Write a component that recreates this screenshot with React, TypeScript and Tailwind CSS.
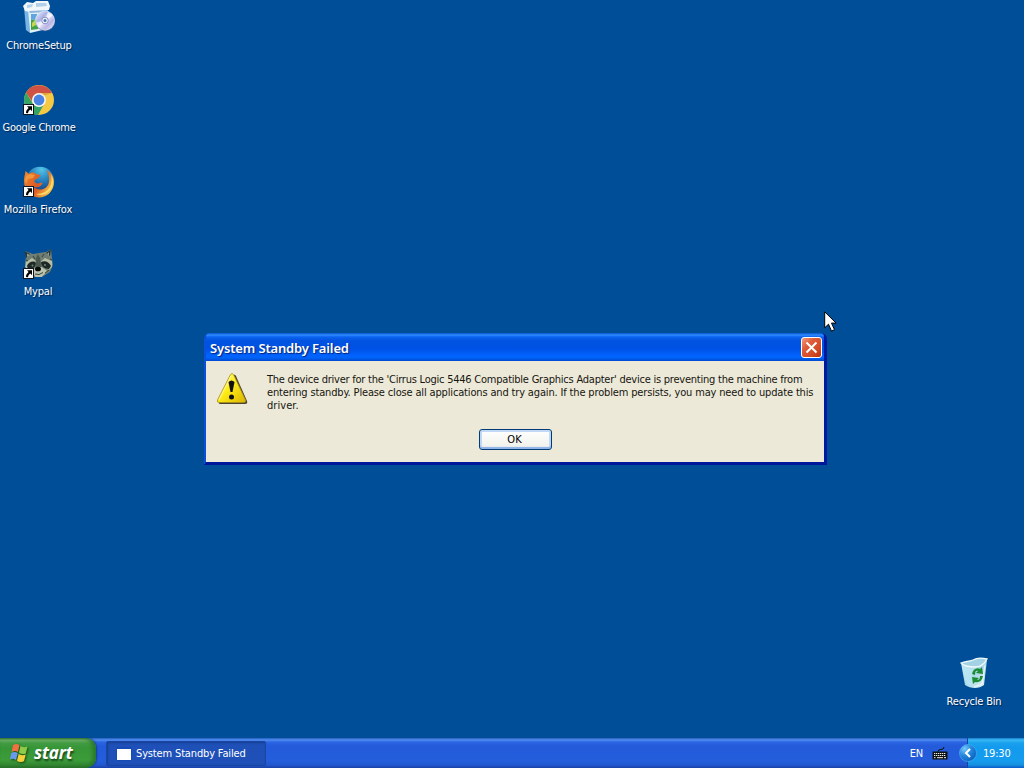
import type { ReactNode } from "react";

const tahoma = "font-['DejaVu_Sans_Condensed','DejaVu_Sans',sans-serif] [font-stretch:condensed]";

function ShortcutArrow() {
  return (
    <g>
      <rect x="0.500" y="20.500" width="10" height="10" fill="#fff" stroke="#10141c" strokeWidth="1" />
      <path d="M4 22.200h5v5L7.400 25.600C6 26.500 5.300 27.700 5 29.300L3 28.900c0-2 .8-3.500 2.600-5z" fill="#000" />
    </g>
  );
}

function SetupIcon() {
  return (
    <svg width="32" height="34" viewBox="0 0 32 34">
      <defs>
        <linearGradient id="disc" x1="0" y1="0" x2="1" y2="1">
          <stop offset="0" stopColor="#f8f8ff" />
          <stop offset=".35" stopColor="#a9b1e5" />
          <stop offset=".5" stopColor="#e9e5fb" />
          <stop offset=".7" stopColor="#b9b4e4" />
          <stop offset="1" stopColor="#eef1ff" />
        </linearGradient>
      </defs>
      <path d="M1 7l5 1 1 25-4-3z" fill="#76b6e6" />
      <path d="M5 8h20l-1 21-17 4z" fill="#e2eff8" />
      <path d="M0 6l4-4 6 1 3-2h12l2 5-1 4-19 2-5-1z" fill="#f1f7fb" />
      <path d="M4 5l6-1-1 3-5 1zM13 3h10l1 3-11 1z" fill="#b4cfe8" />
      <path d="M6 11l19-1v2L7 13z" fill="#8fb8dc" />
      <path d="M8 14h6v5l-6 1z" fill="#5fa6e1" />
      <path d="M8 20l7-1v10l-7 1z" fill="#43a347" />
      <path d="M9 23l3-3 1 5-4 2z" fill="#c7d650" />
      <circle cx="22.200" cy="21.500" r="9.700" fill="#65739f" />
      <circle cx="22" cy="20.500" r="9.500" fill="url(#disc)" stroke="#dce6f8" strokeWidth=".7" />
      <path d="M22 20.500l3-9 5 4zM22 20.500l-9 2 3 5z" fill="#fff" opacity=".65" />
      <circle cx="22" cy="20.500" r="3.300" fill="#eff2fc" stroke="#878fc4" />
      <circle cx="22" cy="20.500" r="1.500" fill="#4977a9" />
    </svg>
  );
}

function ChromeIcon() {
  return (
    <svg width="32" height="32" viewBox="0 0 32 32">
      <circle cx="16" cy="16" r="15" fill="#f6c944" />
      <path d="M3 8.500A15 15 0 0 1 29 9H16a7 7 0 0 0-6.500 9z" fill="#d05245" />
      <path d="M3 8.500A15 15 0 0 0 15 31l6.500-11.500A7 7 0 0 1 9.900 19.500z" fill="#35a365" />
      <path d="M16 9h13l-8 2.500z" fill="#c9802e" opacity=".5" />
      <circle cx="16" cy="16" r="7" fill="#f5f5ef" />
      <circle cx="16" cy="16" r="5.400" fill="#4b83e4" />
      <ShortcutArrow />
    </svg>
  );
}

function FirefoxIcon() {
  return (
    <svg width="32" height="32" viewBox="0 0 32 32" className="ml-[2px]">
      <defs>
        <radialGradient id="globe" cx=".55" cy=".1" r=".8">
          <stop offset="0" stopColor="#53c5e7" />
          <stop offset=".5" stopColor="#267fbe" />
          <stop offset="1" stopColor="#153979" />
        </radialGradient>
        <linearGradient id="fox" x1="0" y1="0" x2="1" y2=".5">
          <stop offset="0" stopColor="#ee8730" />
          <stop offset=".6" stopColor="#dc5824" />
          <stop offset="1" stopColor="#f6c145" />
        </linearGradient>
      </defs>
      <circle cx="17" cy="15" r="14.300" fill="url(#globe)" />
      <path d="M2.500 5l3.500 3C8 6 11 6 13 8l4.500 1-2 3-4 2c-.5 2 1 3.500 3 3.500 2 0 3-1 5-.5-2 5-7 5-10 3 4 5 13 5 16-2 1.500-5 .500-10-2-14 4.500 2 7.500 7 7.500 12C31 25 24 31.500 16 31.500 7 31 1 24 1 15c0-3 .5-5 1-7z" fill="url(#fox)" />
      <path d="M3 10l4-2 5 1-2 3-5 1-2 5c-1-3-1-5 0-8z" fill="#f2993c" />
      <path d="M28 8c4 7 2 15-4 19-4 2.500-8 2.500-11 1 7 0 12-3 14.500-8 1.500-4 1.500-8 .5-12z" fill="#ffe477" opacity=".85" />
      <ShortcutArrow />
    </svg>
  );
}

function RaccoonIcon() {
  return (
    <svg width="32" height="32" viewBox="0 0 32 32" className="ml-[2px]">
      <path d="M2 3l8 3 6-1 7-1 5-3 1 9 1 7-3 7-8 5H11l-7-7-2-7 1-6z" fill="#6f7d72" />
      <path d="M1.500 3l5.500 3-4 4zM28 1l-5 4 4 3z" fill="#26383a" />
      <path d="M4 5.500l3 1.500-3 2zM26 4l-2 2 2 2z" fill="#8f9c8f" />
      <path d="M3 14l6-4 5 4-2 4-7 4-3-3zM29 13l-7-3-5 4 3 4 6 4 3-3z" fill="#b5bea6" />
      <path d="M4 18c1-4 7-6 9-3 0 4-3 6-8 6zM18 14c4-2 8 0 10 4l-2 3c-5 0-8-3-8-7z" fill="#1e2825" />
      <path d="M13 10l2-4 2 4 1.500 9-3 3-3-3z" fill="#4b5850" />
      <path d="M8.500 23l5-4 5 0 6 4-6 6h-6z" fill="#bcc4ae" />
      <ellipse cx="15" cy="21" rx="3" ry="2.300" fill="#080a0a" />
      <path d="M12 26l4 .5 4-2M10 8l2 3M19 9l2-3M3 12l2 1M27 11l2 1M22 25l4-3" stroke="#33423d" strokeWidth="1" fill="none" />
      <circle cx="9.500" cy="17.500" r="1" fill="#71837c" />
      <circle cx="22" cy="17" r="1" fill="#71837c" />
      <ShortcutArrow />
    </svg>
  );
}

function RecycleIcon() {
  return (
    <svg width="32" height="32" viewBox="0 0 32 32">
      <defs>
        <linearGradient id="bin" x1="0" y1="0" x2="1" y2="1">
          <stop offset="0" stopColor="#d3eff5" />
          <stop offset=".5" stopColor="#a6d5e8" />
          <stop offset="1" stopColor="#e4f5f7" />
        </linearGradient>
      </defs>
      <path d="M3 6l14 3 12-6-3 25c-5 4-13 4-19 0z" fill="url(#bin)" />
      <path d="M3 6c5-2 7-1 12-3 5-3 10-2 14-1-2 4-6 8-12 8C11 10 6 9 3 6z" fill="#a3d2e4" stroke="#effafa" strokeWidth="1.300" />
      <path d="M4 9l11 3-1 17-6-2z" fill="#b9e8f3" opacity=".7" />
      <path d="M27 8l-3 19-8 3" stroke="#fff" opacity=".7" fill="none" />
      <g fill="#1c8c32">
        <path d="M14 17c1-5 5-7 8-5l2-2 1 7-7-1 2-2c-2-1-3 0-3 4z" />
        <path d="M25 19c-1 5-4 7-8 6l-2 2-1-7 7 1-2 2c2 0 3-1 3-4z" />
      </g>
    </svg>
  );
}

function DesktopIcon({ place, labelClass, label, children }: { place: string; labelClass: string; label: string; children: ReactNode }) {
  return (
    <div className={`absolute flex w-[78px] flex-col items-center ${place}`}>
      {children}
      <span className={`whitespace-nowrap text-[11px] leading-[14px] text-white [text-shadow:1px_1px_1px_#00254f] ${labelClass}`}>{label}</span>
    </div>
  );
}

function WarningIcon() {
  return (
    <svg width="34" height="34" viewBox="0 0 34 34" className="-mt-px -ml-px mr-px shrink-0">
      <defs>
        <linearGradient id="warn" x1="0" y1="0" x2="1" y2="1">
          <stop offset="0" stopColor="#ffff91" />
          <stop offset=".45" stopColor="#ffee18" />
          <stop offset="1" stopColor="#dbb400" />
        </linearGradient>
      </defs>
      <path d="M17 3q2-1 3 1l11 25q1 3-2 3H5q-3 0-2-2z" fill="#4b432c" />
      <path d="M14.500 2.500q1.500-2 3 0L29.500 28q1 2.500-2 2.500H3.500q-3 0-2-2.500z" fill="url(#warn)" stroke="#a88e1f" strokeWidth=".8" />
      <path d="M3 28l12-24" stroke="#fff6a2" />
      <path d="M12.500 10q3-3 6 0l-2 10h-2z" fill="#111" />
      <circle cx="15.500" cy="25" r="2.500" fill="#111" />
    </svg>
  );
}

function Dialog() {
  return (
    <section className="absolute left-[204px] top-[333px] flex h-[132px] w-[623px] flex-col rounded-t-[6px] border-b-[3px] border-l-2 border-r-[3px] border-b-[#00169b] border-l-[#0b50d8] border-r-[#0019a0] bg-[#0054e3]">
      <header className="flex h-7 shrink-0 items-center justify-between rounded-t-[4px] bg-[linear-gradient(180deg,#0755cc_0,#308bff_2px,#0a62ef_4px,#0052df_8px,#0052e6_16px,#0064ff_23px,#0062f5_25px,#0048d0_28px)] pl-[4px] pr-[2px]">
        <h1 className="pt-px font-['Noto_Sans',sans-serif] text-[13px] font-semibold leading-[18px] tracking-[-0.15px] text-white [text-shadow:1px_1px_1px_#052279]">System Standby Failed</h1>
        <button aria-label="Close" className="flex h-[21px] w-[21px] items-center justify-center rounded-[3px] border border-white bg-[linear-gradient(135deg,#ed9a7a_0%,#df5b3a_35%,#d44a25_70%,#b9310d_100%)]">
          <svg width="13" height="13" viewBox="0 0 13 13"><path d="M1.500 1.500l10 10M11.500 1.500l-10 10" stroke="#fff" strokeWidth="2" /></svg>
        </button>
      </header>
      <div className="flex min-h-0 flex-1 flex-col items-center bg-[#ece9d8]">
        <div className="flex h-[67px] w-full pl-[11px] pt-[12px]">
          <WarningIcon />
          <div className="flex flex-col pl-[16px] text-[11px] leading-[13px] text-[#161510]">
            <span className="whitespace-nowrap tracking-[-0.232px]">The device driver for the 'Cirrus Logic 5446 Compatible Graphics Adapter' device is preventing the machine from</span>
            <span className="whitespace-nowrap tracking-[-0.155px]">entering standby. Please close all applications and try again. If the problem persists, you may need to update this</span>
            <span className="whitespace-nowrap tracking-[0.05px]">driver.</span>
          </div>
        </div>
        <button className="mt-px h-[21px] w-[73px] rounded-[3px] border border-[#003c74] bg-[linear-gradient(#fff,#f0f0ea)] pr-px pt-px text-[11px] leading-[18px] text-black shadow-[inset_0_-2px_1px_#90b2e8,inset_0_0_0_2px_#c2d8f7]">OK</button>
      </div>
    </section>
  );
}

function WindowsFlag() {
  return (
    <svg width="20" height="20" viewBox="0 0 20 20" className="shrink-0 drop-shadow-[1px_1px_1px_#174b15]">
      <path d="M3 2q3-2 6.500 0L8 9Q5 7 1.500 9z" fill="#ef7142" />
      <path d="M10.500 3q3 2 7 .5l-1.700 7Q12 12 9 9.500z" fill="#8ecb49" />
      <path d="M1.300 10Q5 8 7.700 10.200L6 17q-3-2-6.200-.5z" fill="#6a9aeb" />
      <path d="M8.700 11q3.500 2.200 7 .5l-1.700 6.800Q10 20 7 17.800z" fill="#f7cf3b" />
    </svg>
  );
}

function Taskbar() {
  return (
    <footer className="flex h-[30px] w-full items-stretch bg-[linear-gradient(180deg,#255dbe_0,#4f8ef0_2px,#2d66e3_4px,#235bdb_8px,#245edb_23px,#2158cf_27px,#1941a5_30px)]">
      <button className="flex w-[96px] items-center gap-[4px] rounded-r-[10px] bg-[linear-gradient(180deg,#347836_0,#72b36e_2px,#439c43_5px,#369536_10px,#3c9c39_22px,#328632_27px,#246d28_30px)] pl-[10px] text-left shadow-[inset_-3px_0_4px_#28752a,1px_0_2px_#153f90]">
        <WindowsFlag />
        <span className="-mt-px font-['Open_Sans','Noto_Sans',sans-serif] text-[17px] font-bold italic leading-5 tracking-[-0.1px] text-white [font-stretch:normal] [text-shadow:1px_2px_2px_#154419]">start</span>
      </button>
      <div className="flex flex-1 items-center pl-[10px] pt-px">
        <button className="flex h-[25px] w-[160px] items-center gap-[4px] rounded-[2px] border border-[#1946a2] bg-[#1e50b7] pl-[9px] text-[11px] text-white shadow-[inset_1px_1px_2px_#153e91]">
          <span className="flex h-[14px] w-[16px] rounded-[1px] border border-t-2 border-[#164bb5] bg-white" />
          <span className="whitespace-nowrap pt-[2px] tracking-[-0.15px]">System Standby Failed</span>
        </button>
      </div>
      <div className="flex items-center gap-[9px] pr-[10px] text-[11px] text-white">
        <span className="pt-[2px] tracking-[-0.2px]">EN</span>
        <svg width="16" height="14" viewBox="0 0 16 14" className="mt-[2px]">
          <path d="M6 4.500q0-2 3-2T12 0" fill="none" stroke="#111" />
          <rect x=".5" y="4.500" width="15" height="8" fill="#111" />
          <path d="M2 6.500h12M2 8.500h12" stroke="#eee" strokeDasharray="1.300 .7" />
          <path d="M2 10.700h1.500M5 10.700h6M12 10.700h2" stroke="#eee" />
        </svg>
      </div>
      <div className="flex w-[66px] items-center bg-[linear-gradient(180deg,#147bca_0,#3ab8f6_2px,#1aa0ed_5px,#129aee_10px,#159ced_23px,#1690df_27px,#095bc9_30px)]">
        <div className="flex h-[30px] w-[10px] shrink-0 items-center overflow-visible border-r border-[#0d47a8] bg-[linear-gradient(180deg,#255dbe_0,#4f8ef0_2px,#2d66e3_4px,#235bdb_8px,#245edb_23px,#2158cf_27px,#1941a5_30px)]">
          <svg width="18" height="20" viewBox="0 0 18 20" className="relative z-10 ml-px shrink-0">
            <defs><radialGradient id="chevron" cx=".3" cy=".25" r=".8"><stop offset="0" stopColor="#79c8fa" /><stop offset=".5" stopColor="#2388dd" /><stop offset="1" stopColor="#0961be" /></radialGradient></defs>
            <circle cx="9" cy="10" r="8.500" fill="url(#chevron)" stroke="#4cadf0" strokeWidth=".7" />
            <path d="M11 6l-4 4 4 4" fill="none" stroke="#fff" strokeWidth="2" />
          </svg>
        </div>
        <span className="ml-[15px] whitespace-nowrap pt-[2px] text-[11px] tracking-[-0.2px] text-white">19:30</span>
      </div>
    </footer>
  );
}

export default function App() {
  return (
    <main className={`relative flex h-[768px] w-[1024px] flex-col justify-end overflow-hidden bg-[#004e98] ${tahoma}`}>
      <DesktopIcon place="left-0 top-0" labelClass="mt-[5px] tracking-[-0.2px]" label="ChromeSetup"><SetupIcon /></DesktopIcon>
      <DesktopIcon place="left-0 top-[84px]" labelClass="mt-[5px] tracking-[-0.3px]" label="Google Chrome"><ChromeIcon /></DesktopIcon>
      <DesktopIcon place="-left-px top-[166px]" labelClass="mt-[5px] tracking-[-0.1px]" label="Mozilla Firefox"><FirefoxIcon /></DesktopIcon>
      <DesktopIcon place="-left-px top-[248px]" labelClass="mt-[5px] tracking-[-0.2px]" label="Mypal"><RaccoonIcon /></DesktopIcon>
      <DesktopIcon place="left-[935px] top-[657px]" labelClass="mt-[6px] tracking-[-0.2px]" label="Recycle Bin"><RecycleIcon /></DesktopIcon>
      <Dialog />
      <svg className="absolute left-[824px] top-[311px]" width="13" height="22" viewBox="0 0 13 22">
        <path d="M.7.8v16l3.800-3.600 3 6.900 3-1.400-3-6.600h4.600z" fill="#fff" stroke="#000" strokeWidth="1" />
      </svg>
      <Taskbar />
    </main>
  );
}
